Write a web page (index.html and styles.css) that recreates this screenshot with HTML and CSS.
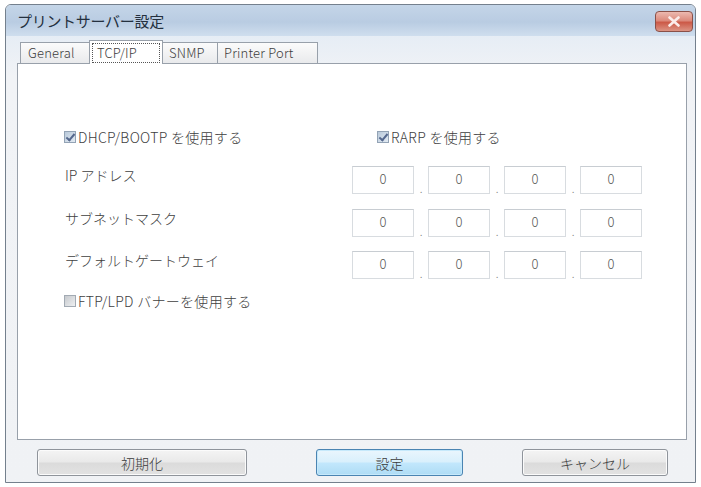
FILE: index.html
```html
<!DOCTYPE html>
<html lang="ja">
<head>
<meta charset="utf-8">
<title>プリントサーバー設定</title>
<link rel="stylesheet" href="styles.css">
</head>
<body>
<div class="window">
  <div class="titlebar">
    <span class="title">プリントサーバー設定</span>
    <button class="close" aria-label="閉じる">
      <svg width="14" height="11" viewBox="0 0 14 11"><path d="M2.5 1.5 L11.5 9.5 M11.5 1.5 L2.5 9.5" stroke="#fbecea" stroke-width="2.6" stroke-linecap="round"/></svg>
    </button>
  </div>
  <div class="body">
    <div class="tabs">
      <div class="tab">General</div>
      <div class="tab active"><span class="focus">TCP/IP</span></div>
      <div class="tab">SNMP</div>
      <div class="tab">Printer Port</div>
    </div>
    <div class="panel">
      <div class="form">
        <label class="check"><span class="box checked"></span>DHCP/BOOTP を使用する</label>
        <label class="check rarp"><span class="box checked"></span>RARP を使用する</label>

        <span class="label">IP アドレス</span>
        <div class="ip"><span class="oct">0</span><span class="dot">.</span><span class="oct">0</span><span class="dot">.</span><span class="oct">0</span><span class="dot">.</span><span class="oct">0</span></div>

        <span class="label">サブネットマスク</span>
        <div class="ip"><span class="oct">0</span><span class="dot">.</span><span class="oct">0</span><span class="dot">.</span><span class="oct">0</span><span class="dot">.</span><span class="oct">0</span></div>

        <span class="label">デフォルトゲートウェイ</span>
        <div class="ip"><span class="oct">0</span><span class="dot">.</span><span class="oct">0</span><span class="dot">.</span><span class="oct">0</span><span class="dot">.</span><span class="oct">0</span></div>

        <label class="check ftp"><span class="box"></span>FTP/LPD バナーを使用する</label>
      </div>
    </div>
    <div class="buttons">
      <button class="btn btn-reset">初期化</button>
      <button class="btn btn-default">設定</button>
      <button class="btn btn-cancel">キャンセル</button>
    </div>
  </div>
</div>
</body>
</html>
```

FILE: styles.css
```css
html, body {
  margin: 0;
  padding: 0;
  background: #ffffff;
}

body {
  font-family: "Noto Sans CJK JP", "Noto Sans", sans-serif;
  font-weight: 300;
  color: #404040;
}

.window {
  box-sizing: border-box;
  margin: 4px 0 0 5px;
  width: 691px;
  height: 479px;
  border: 1px solid #74808d;
  border-radius: 6px 6px 0 0;
  background: #eef2f7;
  display: flex;
  flex-direction: column;
  overflow: hidden;
}

.titlebar {
  height: 31px;
  flex: none;
  display: flex;
  align-items: center;
  justify-content: space-between;
  padding: 0 2px 0 11px;
  background: linear-gradient(#c4d5e8, #b9cce2 55%, #cfdeee);
}

.title {
  font-size: 15px;
  font-weight: 400;
  color: #24303e;
  letter-spacing: -0.3px;
}

.close {
  width: 38px;
  height: 21px;
  padding: 0;
  border: 1px solid #8a5048;
  border-radius: 4px;
  background: linear-gradient(#ecb9b0, #dc8a7c 45%, #cc5a48 55%, #dc9484);
  display: flex;
  align-items: center;
  justify-content: center;
  margin-top: 1px;
}

.body {
  flex: 1;
  display: flex;
  flex-direction: column;
  padding: 5px 8px 0 11px;
  background: linear-gradient(#e6edf5, #f1f3f6 40px, #f0f2f5);
}

.tabs {
  display: flex;
  height: 22px;
  padding-left: 3px;
  align-items: flex-end;
  position: relative;
  z-index: 1;
}

.tab {
  box-sizing: border-box;
  height: 21px;
  padding: 0 6px;
  font-size: 13px;
  line-height: 20px;
  color: #3c3c3c;
  border: 1px solid #98a0aa;
  border-bottom: none;
  margin-right: -1px;
  background: linear-gradient(#fbfbfb, #e9eaec);
  letter-spacing: 0.2px;
}

.tab:first-child { width: 70px; padding-left: 7px; }
.tab:nth-child(3) { width: 56px; }
.tab:nth-child(4) { width: 101px; }

.tab.active {
  height: 24px;
  width: 74px;
  margin-bottom: -1px;
  background: #ffffff;
  padding: 2px 2px 0;
  line-height: 18px;
}

.focus {
  display: block;
  border: 1px dotted #555;
  padding: 0 4px;
  height: 18px;
}

.panel {
  box-sizing: border-box;
  height: 377px;
  background: #ffffff;
  border: 1px solid #98a0aa;
  padding: 63px 0 0 46px;
}

/* two columns: captions on the left, address fields on the right */
.form {
  display: grid;
  grid-template-columns: 288px auto;
  grid-template-rows: 39px 43px 42px 40px 19px;
  align-items: start;
  font-size: 14px;
  line-height: 18px;
}

.check {
  display: flex;
  align-items: center;
  gap: 2px;
  height: 19px;
  white-space: nowrap;
  letter-spacing: 0.3px;
}

.check.rarp { padding-left: 25px; }
.check.ftp { grid-column: 1 / 3; }

.box {
  box-sizing: border-box;
  width: 12px;
  height: 12px;
  border: 1px solid #a2aab3;
  background: linear-gradient(135deg, #c6c9cd, #eef0f2);
  position: relative;
  flex: none;
}

.box.checked {
  background: linear-gradient(135deg, #b9c9da, #e3ebf3);
  border-color: #93a3b5;
}

.box.checked::after {
  content: "";
  position: absolute;
  left: 3px;
  top: 0px;
  width: 3px;
  height: 7px;
  border: solid #55688e;
  border-width: 0 2px 2px 0;
  transform: rotate(40deg);
}

.label {
  padding: 0 0 0 1px;
  white-space: nowrap;
}

.ip {
  display: flex;
  align-items: stretch;
  height: 28px;
}

.oct {
  box-sizing: border-box;
  width: 62px;
  border: 1px solid #d8dce0;
  border-top-color: #c8cdd2;
  display: flex;
  justify-content: center;
  align-items: flex-start;
  padding-top: 3px;
  font-size: 13px;
  color: #555;
}

.dot {
  width: 14px;
  display: flex;
  justify-content: center;
  align-items: flex-end;
  font-size: 11px;
  line-height: 12px;
  color: #888;
}

.buttons {
  display: flex;
  align-items: center;
  height: 45px;
  padding: 0 19px 0 20px;
  justify-content: space-between;
}

.btn {
  height: 27px;
  border: 1px solid #8f949b;
  border-radius: 3px;
  background: linear-gradient(#f4f4f4, #e9e9e9 48%, #dbdbdb 52%, #e2e2e2);
  font-family: "Noto Sans CJK JP", sans-serif;
  font-weight: 300;
  font-size: 14px;
  color: #3a3a3a;
  padding: 0;
  box-shadow: inset 0 0 0 1px #fbfbfb;
}

.btn-reset { width: 210px; }
.btn-default {
  width: 147px;
  margin-left: 10px;
  border-color: #4a84b2;
  background: linear-gradient(#eaf6fd, #d9f0fc 48%, #c2e7fc 52%, #aedcf5);
  box-shadow: inset 0 0 0 1px #c6e9fb;
}
.btn-cancel { width: 146px; }
```
